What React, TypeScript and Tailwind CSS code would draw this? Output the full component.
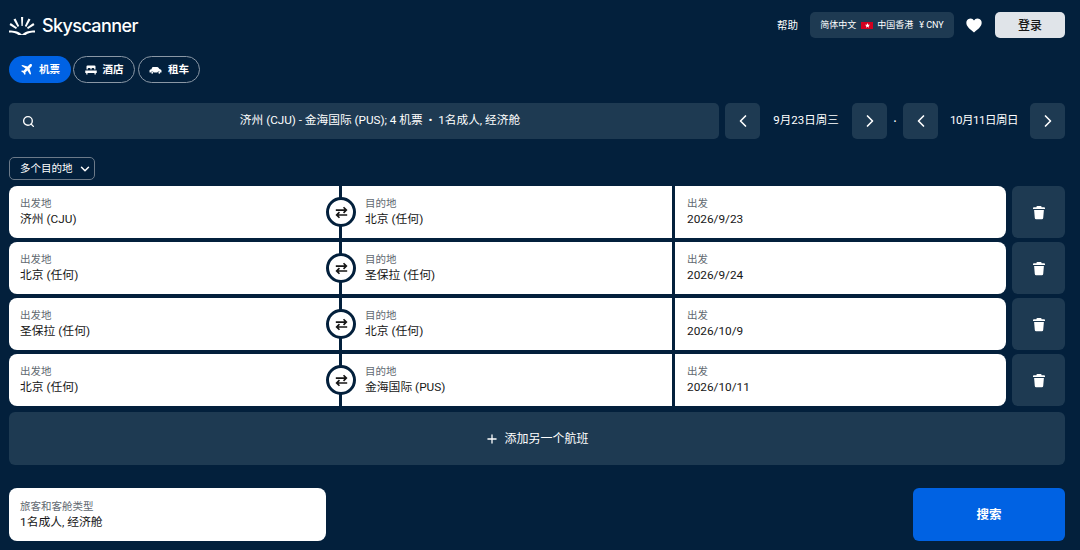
import { Search, ChevronLeft, ChevronRight, ChevronDown, Plus } from "lucide-react";

const font = { fontFamily: '"Roboto","Noto Sans CJK SC",sans-serif' };

function Logo() {
  return (
    <div className="flex items-center gap-[7px] pt-[2px]">
      <svg width="26" height="19" viewBox="0 0 26 19" fill="#fff">
        <path d="M0 13.500C5 13.500 9.500 14.200 13 17.500 16.500 14.200 21 13.500 26 13.500V15.500C22 15.500 19 16 16.500 18H9.500C7 16 4 15.500 0 15.500Z" />
        <path d="M12 0h2.200l-.5 9h-1.200z" />
        <path d="M4.500 2.500 6.500 1.500 10.200 9 8.700 10z" />
        <path d="M21.500 2.500 19.500 1.500 15.800 9 17.300 10z" />
        <path d="M.5 8 1.700 6 8 10.500 7 12z" />
        <path d="M25.500 8 24.300 6 18 10.500 19 12z" />
      </svg>
      <span className="text-[18px] leading-none font-medium text-white" style={{ fontFamily: '"Inter",sans-serif', letterSpacing: "-0.6px" }}>
        Skyscanner
      </span>
    </div>
  );
}

function Plane() {
  return (
    <svg width="13" height="13" viewBox="0 0 24 24" fill="#fff">
      <path d="M21.500 2.500c-1-1-2.700-.9-3.800.2L14 6.400 4.300 3.500 2.500 5.300l7.800 5L6.500 14.200l-3-.5L2 15.200l4.200 2.600L8.800 22l1.500-1.500-.5-3 3.900-3.800 5 7.800 1.800-1.800L17.600 10l3.700-3.700c1.100-1.100 1.200-2.800.2-3.800z" />
    </svg>
  );
}

function Bed() {
  return (
    <svg width="12" height="12" viewBox="0 0 24 24" fill="#fff">
      <path d="M5 3h14a2 2 0 0 1 2 2v6h-2.500V9.500A1.500 1.500 0 0 0 17 8h-2.500A1.500 1.500 0 0 0 13 9.500V11h-2V9.500A1.500 1.500 0 0 0 9.500 8H7a1.500 1.500 0 0 0-1.500 1.500V11H3V5a2 2 0 0 1 2-2z" />
      <path d="M0.500 13h23v5h-2v3H19v-3H5v3H2.500v-3h-2z" />
    </svg>
  );
}

function Car() {
  return (
    <svg width="13" height="12" viewBox="0 0 24 24" fill="#fff">
      <path d="M7 6h8.500c1 0 1.900.5 2.500 1.300L20 10l2.300 1c1 .4 1.700 1.400 1.700 2.500V16a1 1 0 0 1-1 1h-1.500a3 3 0 0 0-5.800 0H8.300a3 3 0 0 0-5.800 0H1a1 1 0 0 1-1-1v-3c0-1.100.8-2 1.900-2.200L4 10.400l.8-2.600C5.100 6.700 6 6 7 6z" />
      <circle cx="5.400" cy="17.500" r="1.800" />
      <circle cx="19.600" cy="17.500" r="1.800" />
    </svg>
  );
}

function Swap() {
  return (
    <svg width="13" height="13" viewBox="0 0 16 16" fill="none" stroke="#161616" strokeWidth="2">
      <path d="M1 5h13M10.500 1.500 14 5l-3.500 3.500" />
      <path d="M15 11H2M5.500 7.500 2 11l3.500 3.500" />
    </svg>
  );
}

function Trash() {
  return (
    <svg width="12" height="15" viewBox="0 0 14 16" fill="#fff">
      <path d="M5 0.500h4a1 1 0 0 1 1 1V2h3a1 1 0 0 1 1 1v.800H0V3a1 1 0 0 1 1-1h3v-.500a1 1 0 0 1 1-1z" />
      <path d="M1.300 5h11.400l-.8 9.300a1.600 1.600 0 0 1-1.600 1.500H3.700a1.600 1.600 0 0 1-1.600-1.500z" />
    </svg>
  );
}

function HKFlag() {
  return (
    <span className="flex h-[7px] w-[12px] items-center justify-center bg-[#d2001f]">
      <svg width="5" height="5" viewBox="0 0 10 10" fill="#fff">
        <path d="M5 0l1.400 3.300L10 3.600 7.300 6l.8 3.500L5 7.700 1.900 9.500 2.700 6 0 3.600l3.600-.3z" />
      </svg>
    </span>
  );
}

function Tab({ active, icon, label, w }: { active?: boolean; icon: React.ReactNode; label: string; w: string }) {
  return (
    <div
      className={`flex h-[27px] items-center justify-center gap-[6px] rounded-full text-[10.5px] font-bold text-white ${w} ${
        active ? "bg-[#0062e3]" : "border border-[#8a97a5]"
      }`}
    >
      {icon}
      <span>{label}</span>
    </div>
  );
}

function NavButton({ right }: { right?: boolean }) {
  const Icon = right ? ChevronRight : ChevronLeft;
  return (
    <div className="flex h-[36px] w-[35px] shrink-0 items-center justify-center rounded-[5px] bg-[#1e3a52]">
      <Icon size={20} color="#fff" strokeWidth={2} />
    </div>
  );
}

function Field({ label, value }: { label: string; value: string }) {
  return (
    <div className="flex flex-col">
      <span className="text-[10.5px] leading-[14px] text-[#626971]">{label}</span>
      <span className="text-[11.8px] leading-[16px] text-[#161616]">{value}</span>
    </div>
  );
}

function LegRow({ from, to, date }: { from: string; to: string; date: string }) {
  return (
    <div className="flex gap-[6px]">
      <div className="relative flex h-[52px] flex-1 overflow-hidden rounded-[8px]">
        <div className="flex w-[330px] items-center bg-white pl-[11px]">
          <Field label="出发地" value={from} />
        </div>
        <div className="w-[3px] bg-[#03203c]" />
        <div className="flex w-[330px] items-center bg-white pl-[23px]">
          <Field label="目的地" value={to} />
        </div>
        <div className="w-[3px] bg-[#03203c]" />
        <div className="flex flex-1 items-center bg-white pl-[12px]">
          <Field label="出发" value={date} />
        </div>
        <div className="absolute left-[317px] top-[11px] flex h-[30px] w-[30px] items-center justify-center rounded-full border-[3px] border-[#03203c] bg-white">
          <Swap />
        </div>
      </div>
      <div className="flex h-[52px] w-[53px] items-center justify-center rounded-[6px] bg-[#1e3a52]">
        <Trash />
      </div>
    </div>
  );
}

export default function App() {
  return (
    <div className="h-[550px] w-[1080px] overflow-hidden bg-[#03203c] pl-[9px] pr-[15px]" style={font}>
      <header className="flex h-[50px] items-center justify-between">
        <Logo />
        <div className="flex items-center text-white">
          <span className="mr-[12px] pt-px text-[10.5px]">帮助</span>
          <div className="flex h-[26px] w-[144px] items-center justify-center rounded-[5px] bg-[#1e3a52] pt-px text-[9px]">
            <span>简体中文</span>
            <span className="ml-[5px] mr-[4px]"><HKFlag /></span>
            <span>中国香港</span>
            <span className="ml-[6px]">¥ CNY</span>
          </div>
          <svg className="ml-[12px]" width="16" height="15" viewBox="0 0 24 22" fill="#fff">
            <path d="M12 21.500C5 16 .5 12 .5 7A6.300 6.300 0 0 1 12 3.500 6.300 6.300 0 0 1 23.500 7c0 5-4.500 9-11.500 14.500z" />
          </svg>
          <div className="ml-[13px] flex h-[26px] w-[70px] items-center justify-center rounded-[5px] bg-[#e0e4e9] pt-px text-[12px] font-medium text-[#161616]">
            登录
          </div>
        </div>
      </header>

      <div className="mt-[6px] flex gap-[2px]">
        <Tab active icon={<Plane />} label="机票" w="w-[62px]" />
        <Tab icon={<Bed />} label="酒店" w="w-[62px]" />
        <Tab icon={<Car />} label="租车" w="w-[62px] ml-px" />
      </div>

      <div className="mt-[20px] flex h-[36px] items-center">
        <div className="relative flex h-full w-[710px] items-center justify-center rounded-[5px] bg-[#1e3a52] pl-[32px] text-[11.7px] text-white">
          <Search size={13} color="#fff" strokeWidth={2.500} className="absolute left-[13px] top-[12px]" />
          <span>济州 (CJU) - 金海国际 (PUS); 4 机票 &nbsp;•&nbsp; 1名成人, 经济舱</span>
        </div>
        <div className="ml-[6px]"><NavButton /></div>
        <span className="w-[92px] text-center text-[11.500px] text-white">9月23日周三</span>
        <NavButton right />
        <span className="w-[16px] text-center text-[10px] font-bold text-white">·</span>
        <NavButton />
        <span className="w-[92px] text-center text-[11.500px] tracking-[-0.5px] text-white">10月11日周日</span>
        <NavButton right />
      </div>

      <div className="mt-[18px] flex h-[23px] w-[86px] items-center gap-[5px] rounded-[5px] border border-[#6c7a89] pl-[10px] text-[10.500px] text-white">
        <span>多个目的地</span>
        <ChevronDown size={14} color="#fff" strokeWidth={2.500} />
      </div>

      <div className="mt-[6px] flex flex-col gap-[4px]">
        <LegRow from="济州 (CJU)" to="北京 (任何)" date="2026/9/23" />
        <LegRow from="北京 (任何)" to="圣保拉 (任何)" date="2026/9/24" />
        <LegRow from="圣保拉 (任何)" to="北京 (任何)" date="2026/10/9" />
        <LegRow from="北京 (任何)" to="金海国际 (PUS)" date="2026/10/11" />
      </div>

      <div className="mt-[6px] flex h-[53px] items-center justify-center gap-[5px] rounded-[6px] bg-[#1e3a52] text-[12px] text-white">
        <Plus size={14} color="#fff" strokeWidth={2.200} />
        <span>添加另一个航班</span>
      </div>

      <div className="mt-[23px] flex items-stretch justify-between">
        <div className="flex h-[53px] w-[317px] items-center rounded-[8px] bg-white pl-[11px]">
          <Field label="旅客和客舱类型" value="1名成人, 经济舱" />
        </div>
        <div className="flex h-[53px] w-[152px] items-center justify-center rounded-[6px] bg-[#0062e3] pt-px text-[12.500px] font-bold text-white">
          搜索
        </div>
      </div>
    </div>
  );
}
